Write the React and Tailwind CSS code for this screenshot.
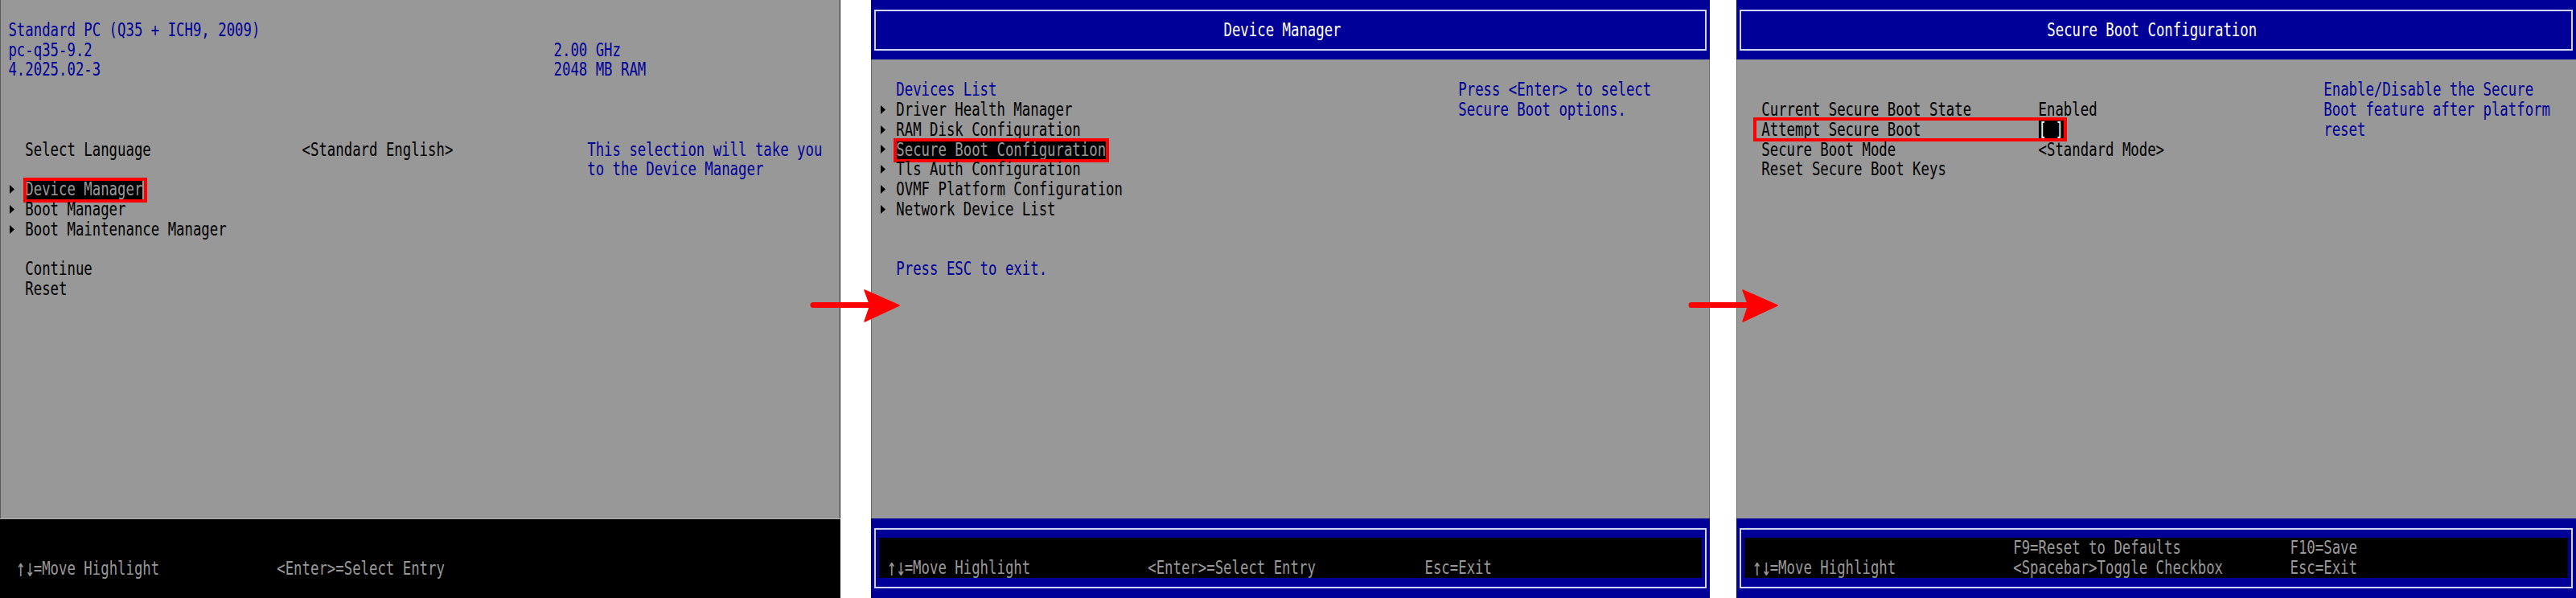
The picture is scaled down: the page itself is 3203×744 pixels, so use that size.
import React from "react";

// one text cell run, stretched to the tall 8x19 console glyph shape
function T({ children, className = "" }) {
  return (
    <span className={`inline-block h-[24.8px] scale-y-[1.3] whitespace-pre ${className}`}>
      {children}
    </span>
  );
}

function Row({ children, className = "" }) {
  return <div className={`relative flex h-[24.8px] items-center ${className}`}>{children}</div>;
}

function Bullet() {
  return (
    <span className="flex h-[24.8px] w-[2ch] items-center">
      <svg className="ml-[1.5px]" width="6" height="11" viewBox="0 0 6 11">
        <path d="M0 0 L6 5.5 L0 11 Z" fill="#000000" />
      </svg>
    </span>
  );
}

// the up/down arrows sit full height in the console font
function UpDown() {
  return <span className="inline-block scale-y-[1.35] scale-x-110">↑↓</span>;
}

function Picked({ children, box }) {
  return (
    <span className="relative flex h-[24.8px] bg-black text-[#989898]">
      <T>{children}</T>
      <span className={`absolute border-4 border-[#ff0000] ${box}`} />
    </span>
  );
}

function Header({ title, pad }) {
  return (
    <div className="h-[74.4px] bg-[#000098] px-[4px] pt-[12px]">
      <div className={`flex h-[50.6px] items-center border-2 border-[#d4d4f6] text-white ${pad}`}>
        <T>{title}</T>
      </div>
    </div>
  );
}

function Arrow({ className }) {
  return (
    <svg className={`absolute top-[358px] ${className}`} width="112" height="44" viewBox="0 0 112 44">
      <path d="M4 21.5 H78" stroke="#ff0000" strokeWidth="7" strokeLinecap="round" />
      <path d="M68 3 L111 22 L68 42 L75 22 Z" fill="#ff0000" stroke="#ff0000" strokeWidth="1.5" strokeLinejoin="round" />
    </svg>
  );
}

export default function App() {
  return (
    <div className="relative flex h-[744px] w-[3203px] overflow-hidden bg-white font-['DejaVu_Sans_Mono',monospace] text-[17.34px] leading-[24.8px] text-black">

      {/* Front page */}
      <div className="flex h-[744px] w-[1045px] flex-col bg-[#989898] shadow-[inset_1px_0_0_#5c5c5c,inset_-1px_0_0_#1a1a1a]">
        <div className="h-[644.8px]">
          <Row />
          <Row className="pl-[1ch] text-[#000098]">
            <T>Standard PC (Q35 + ICH9, 2009)</T>
          </Row>
          <Row className="pl-[1ch] text-[#000098]">
            <T className="w-[65ch]">pc-q35-9.2</T>
            <T>2.00 GHz</T>
          </Row>
          <Row className="pl-[1ch] text-[#000098]">
            <T className="w-[65ch]">4.2025.02-3</T>
            <T>2048 MB RAM</T>
          </Row>
          <Row />
          <Row />
          <Row />
          <Row className="pl-[3ch]">
            <T className="w-[33ch]">Select Language</T>
            <T className="w-[34ch]">&lt;Standard English&gt;</T>
            <T className="text-[#000098]">This selection will take you</T>
          </Row>
          <Row className="pl-[70ch]">
            <T className="text-[#000098]">to the Device Manager</T>
          </Row>
          <Row className="pl-[1ch]">
            <Bullet />
            <Picked box="left-[-2.3px] right-[-5.8px] top-[-2.2px] bottom-[-4.3px]">Device Manager</Picked>
          </Row>
          <Row className="pl-[1ch]">
            <Bullet />
            <T>Boot Manager</T>
          </Row>
          <Row className="pl-[1ch]">
            <Bullet />
            <T>Boot Maintenance Manager</T>
          </Row>
          <Row />
          <Row className="pl-[3ch]">
            <T>Continue</T>
          </Row>
          <Row className="pl-[3ch]">
            <T>Reset</T>
          </Row>
        </div>
        <div className="h-[99.2px] border-t border-[#b0b0b0] bg-black text-[#989898]">
          <Row />
          <Row />
          <Row className="pl-[2ch]">
            <T className="w-[31ch]"><UpDown />=Move Highlight</T>
            <T>&lt;Enter&gt;=Select Entry</T>
          </Row>
        </div>
      </div>

      {/* Device Manager */}
      <div className="ml-[38px] flex h-[744px] w-[1043px] flex-col bg-[#989898] shadow-[inset_1px_0_0_#6a6a6a,inset_-1px_0_0_#6a6a6a]">
        <Header title="Device Manager" pad="pl-[432.5px]" />
        <div className="h-[570.4px]">
          <Row />
          <Row className="pl-[3ch] text-[#000098]">
            <T className="w-[67ch]">Devices List</T>
            <T>Press &lt;Enter&gt; to select</T>
          </Row>
          <Row className="pl-[1ch]">
            <Bullet />
            <T className="w-[67ch]">Driver Health Manager</T>
            <T className="text-[#000098]">Secure Boot options.</T>
          </Row>
          <Row className="pl-[1ch]">
            <Bullet />
            <T>RAM Disk Configuration</T>
          </Row>
          <Row className="pl-[1ch]">
            <Bullet />
            <Picked box="left-[-3.6px] right-[-4.1px] top-[-1.9px] bottom-[-3.3px]">Secure Boot Configuration</Picked>
          </Row>
          <Row className="pl-[1ch]">
            <Bullet />
            <T>Tls Auth Configuration</T>
          </Row>
          <Row className="pl-[1ch]">
            <Bullet />
            <T>OVMF Platform Configuration</T>
          </Row>
          <Row className="pl-[1ch]">
            <Bullet />
            <T>Network Device List</T>
          </Row>
          <Row />
          <Row />
          <Row className="pl-[3ch]">
            <T className="text-[#000098]">Press ESC to exit.</T>
          </Row>
        </div>
        <div className="h-[99.2px] bg-[#000098] px-[4px] pt-[12px]">
          <div className="h-[75px] border-2 border-[#d4d4f6] px-[4.4px] pt-[10.6px]">
            <div className="h-[49.6px] bg-black text-[#989898]">
              <Row />
              <Row className="pl-[1ch]">
                <T className="w-[31ch]"><UpDown />=Move Highlight</T>
                <T className="w-[33ch]">&lt;Enter&gt;=Select Entry</T>
                <T>Esc=Exit</T>
              </Row>
            </div>
          </div>
        </div>
      </div>

      {/* Secure Boot Configuration */}
      <div className="ml-[33px] flex h-[744px] w-[1044px] flex-col bg-[#989898] shadow-[inset_1px_0_0_#6a6a6a]">
        <Header title="Secure Boot Configuration" pad="pl-[380.3px]" />
        <div className="h-[570.4px]">
          <Row />
          <Row className="pl-[70ch]">
            <T className="text-[#000098]">Enable/Disable the Secure</T>
          </Row>
          <Row className="pl-[3ch]">
            <T className="w-[33ch]">Current Secure Boot State</T>
            <T className="w-[34ch]">Enabled</T>
            <T className="text-[#000098]">Boot feature after platform</T>
          </Row>
          <Row className="pl-[3ch]">
            <T className="w-[33ch]">Attempt Secure Boot</T>
            <span className="flex w-[34ch]">
              <span className="flex h-[24.8px] bg-black text-white">
                <T>[ ]</T>
              </span>
            </span>
            <T className="text-[#000098]">reset</T>
            <span className="absolute left-[20.9px] top-[-2.8px] h-[29.6px] w-[390px] border-4 border-[#ff0000]" />
          </Row>
          <Row className="pl-[3ch]">
            <T className="w-[33ch]">Secure Boot Mode</T>
            <T>&lt;Standard Mode&gt;</T>
          </Row>
          <Row className="pl-[3ch]">
            <T>Reset Secure Boot Keys</T>
          </Row>
        </div>
        <div className="h-[99.2px] bg-[#000098] px-[4px] pt-[12px]">
          <div className="h-[75px] border-2 border-[#d4d4f6] px-[4.4px] pt-[10.6px]">
            <div className="h-[49.6px] bg-black text-[#989898]">
              <Row className="pl-[32ch]">
                <T className="w-[33ch]">F9=Reset to Defaults</T>
                <T>F10=Save</T>
              </Row>
              <Row className="pl-[1ch]">
                <T className="w-[31ch]"><UpDown />=Move Highlight</T>
                <T className="w-[33ch]">&lt;Spacebar&gt;Toggle Checkbox</T>
                <T>Esc=Exit</T>
              </Row>
            </div>
          </div>
        </div>
      </div>

      <Arrow className="left-[1007px]" />
      <Arrow className="left-[2099px]" />
    </div>
  );
}
